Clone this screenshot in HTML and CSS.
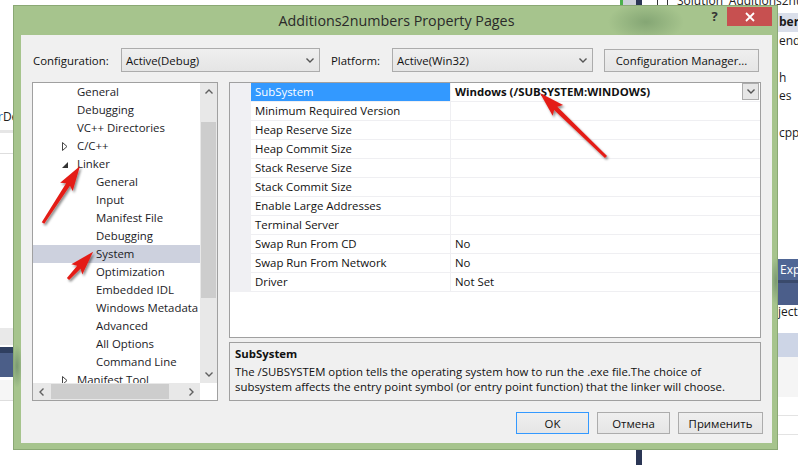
FILE: index.html
```html
<!DOCTYPE html>
<html>
<head>
<meta charset="utf-8">
<link rel="stylesheet" href="styles.css">
</head>
<body>
<div class="bg-left">
  <div class="bl-sp1"></div>
  <div class="bl-text"><span class="bl-blue">r</span>De</div>
  <div class="bl-sp2"></div>
  <div class="bl-band"></div>
  <div class="bl-sp3"></div>
  <div class="bl-line"></div>
  <div class="bl-sp4"></div>
  <div class="bl-gray"></div>
  <div class="bl-sp5"></div>
  <div class="bl-navy"></div>
  <div class="bl-blue2"></div>
  <div class="bl-sp6"></div>
  <div class="bl-light"></div>
  <div class="bl-line"></div>
</div>

<div class="bg-top"><span class="bg-top-icon"></span><span class="bg-top-text">Solution 'Additions2numbers' (1 project)</span></div>
<div class="bg-strip"><div class="bs-green"></div><div class="bs-gray"></div></div>
<div class="bg-vbar"></div>

<div class="bg-right">
  <div class="br-sp"></div>
  <div class="br-row br-sel">bers'</div>
  <div class="br-row">endencies</div>
  <div class="br-row"></div>
  <div class="br-row">h</div>
  <div class="br-row">es</div>
  <div class="br-row"></div>
  <div class="br-row">cpp</div>
  <div class="br-sp2"></div>
  <div class="br-bar">Exp</div>
  <div class="br-navy"></div>
  <div class="br-blue"></div>
  <div class="br-text">ject</div>
  <div class="br-sp3"></div>
  <div class="br-sel2"></div>
  <div class="br-light"></div>
  <div class="br-sp4"></div>
  <div class="br-line"></div>
  <div class="br-sp5"></div>
  <div class="br-line"></div>
</div>

<div class="window">
  <div class="titlebar">
    <div class="tb-left"></div>
    <div class="tb-title">Additions2numbers Property Pages</div>
    <div class="tb-controls">
      <div class="tb-help">?</div>
      <div class="tb-close"><svg width="10" height="10" viewBox="0 0 10 10"><path d="M1 1L9 9M9 1L1 9" stroke="#fff" stroke-width="1.8"/></svg></div>
    </div>
  </div>
  <div class="client">
    <div class="cfg-row">
      <div class="lbl lbl-config">Configuration:</div>
      <div class="combo combo-config"><span class="combo-text">Active(Debug)</span><svg class="chev" width="8" height="5" viewBox="0 0 8 5"><polyline points="0.5,0.5 4,4 7.5,0.5" fill="none" stroke="#555" stroke-width="1.4"/></svg></div>
      <div class="lbl lbl-platform">Platform:</div>
      <div class="combo combo-platform"><span class="combo-text">Active(Win32)</span><svg class="chev" width="8" height="5" viewBox="0 0 8 5"><polyline points="0.5,0.5 4,4 7.5,0.5" fill="none" stroke="#555" stroke-width="1.4"/></svg></div>
      <div class="btn btn-cm">Configuration Manager...</div>
    </div>

    <div class="main">
      <div class="tree">
        <div class="tree-items">
          <div class="ti l1"><span class="exp"></span>General</div>
          <div class="ti l1"><span class="exp"></span>Debugging</div>
          <div class="ti l1"><span class="exp"></span>VC++ Directories</div>
          <div class="ti l1"><span class="exp"><svg width="6" height="9" viewBox="0 0 6 9"><polygon points="0.5,0.5 5,4.5 0.5,8.5" fill="none" stroke="#444" stroke-width="1"/></svg></span>C/C++</div>
          <div class="ti l1"><span class="exp exp-open"><svg width="6" height="6" viewBox="0 0 6 6"><polygon points="6,0 6,6 0,6" fill="#333"/></svg></span>Linker</div>
          <div class="ti l2">General</div>
          <div class="ti l2">Input</div>
          <div class="ti l2">Manifest File</div>
          <div class="ti l2">Debugging</div>
          <div class="ti l2 ti-sel">System</div>
          <div class="ti l2">Optimization</div>
          <div class="ti l2">Embedded IDL</div>
          <div class="ti l2">Windows Metadata</div>
          <div class="ti l2">Advanced</div>
          <div class="ti l2">All Options</div>
          <div class="ti l2">Command Line</div>
          <div class="ti l1"><span class="exp"><svg width="6" height="9" viewBox="0 0 6 9"><polygon points="0.5,0.5 5,4.5 0.5,8.5" fill="none" stroke="#444" stroke-width="1"/></svg></span>Manifest Tool</div>
        </div>
        <div class="vscroll">
          <div class="sarr"><svg width="8" height="5" viewBox="0 0 8 5"><polyline points="0.5,4.5 4,1 7.5,4.5" fill="none" stroke="#606060" stroke-width="1.4"/></svg></div>
          <div class="vthumb"></div>
          <div class="sfill"></div>
          <div class="sarr"><svg width="8" height="5" viewBox="0 0 8 5"><polyline points="0.5,0.5 4,4 7.5,0.5" fill="none" stroke="#606060" stroke-width="1.4"/></svg></div>
        </div>
        <div class="hscroll">
          <div class="sarr"><svg width="5" height="8" viewBox="0 0 5 8"><polyline points="4.5,0.5 1,4 4.5,7.5" fill="none" stroke="#606060" stroke-width="1.4"/></svg></div>
          <div class="hthumb"></div>
          <div class="sfill"></div>
          <div class="sarr"><svg width="5" height="8" viewBox="0 0 5 8"><polyline points="0.5,0.5 4,4 0.5,7.5" fill="none" stroke="#606060" stroke-width="1.4"/></svg></div>
        </div>
        <div class="corner"></div>
      </div>

      <div class="rcol">
        <div class="grid">
          <div class="gr"><div class="gg"></div><div class="gn gn-sel">SubSystem</div><div class="gv"><span class="gv-text gv-bold">Windows (/SUBSYSTEM:WINDOWS)</span><span class="dd"><svg width="8" height="5" viewBox="0 0 8 5"><polyline points="0.5,0.5 4,4 7.5,0.5" fill="none" stroke="#555" stroke-width="1.4"/></svg></span></div></div>
          <div class="gr"><div class="gg"></div><div class="gn">Minimum Required Version</div><div class="gv"></div></div>
          <div class="gr"><div class="gg"></div><div class="gn">Heap Reserve Size</div><div class="gv"></div></div>
          <div class="gr"><div class="gg"></div><div class="gn">Heap Commit Size</div><div class="gv"></div></div>
          <div class="gr"><div class="gg"></div><div class="gn">Stack Reserve Size</div><div class="gv"></div></div>
          <div class="gr"><div class="gg"></div><div class="gn">Stack Commit Size</div><div class="gv"></div></div>
          <div class="gr"><div class="gg"></div><div class="gn">Enable Large Addresses</div><div class="gv"></div></div>
          <div class="gr"><div class="gg"></div><div class="gn">Terminal Server</div><div class="gv"></div></div>
          <div class="gr"><div class="gg"></div><div class="gn">Swap Run From CD</div><div class="gv"><span class="gv-text">No</span></div></div>
          <div class="gr"><div class="gg"></div><div class="gn">Swap Run From Network</div><div class="gv"><span class="gv-text">No</span></div></div>
          <div class="gr"><div class="gg"></div><div class="gn">Driver</div><div class="gv"><span class="gv-text">Not Set</span></div></div>
        </div>
        <div class="desc">
          <div class="desc-title">SubSystem</div>
          <div class="desc-text">The /SUBSYSTEM option tells the operating system how to run the .exe file.The choice of<br>subsystem affects the entry point symbol (or entry point function) that the linker will choose.</div>
        </div>
      </div>
    </div>

    <div class="btns">
      <div class="btn btn-ok">OK</div>
      <div class="btn btn-cancel">Отмена</div>
      <div class="btn btn-apply">Применить</div>
    </div>
  </div>
</div>

<svg class="arrows" width="798" height="465" viewBox="0 0 798 465">
  <defs>
    <filter id="sh" x="-20%" y="-20%" width="140%" height="140%">
      <feDropShadow dx="1.5" dy="2" stdDeviation="1.3" flood-color="#000" flood-opacity="0.45"/>
    </filter>
  </defs>
  <g filter="url(#sh)" fill="#e41e18">
    <polygon transform="translate(606,157) rotate(-135.9)" points="0,-1.5 70,-2.3 67,-7.5 92,0 67,7.5 70,2.3 0,1.5"/>
    <polygon transform="translate(43,223) rotate(-57)" points="0,-1.5 46,-2.3 43,-7.5 68,0 43,7.5 46,2.3 0,1.5"/>
    <polygon transform="translate(68,279) rotate(-47.2)" points="0,-1.5 16,-2.3 13,-7.5 37,0 13,7.5 16,2.3 0,1.5"/>
  </g>
</svg>
</body>
</html>
```

FILE: styles.css
```css
* { box-sizing: border-box; }
body {
  margin: 0;
  width: 798px;
  height: 465px;
  overflow: hidden;
  position: relative;
  background: #fff;
  font-family: "Open Sans", "Noto Sans", sans-serif;
  font-size: 11.4px;
  color: #111;
}

/* ---------- background (desktop behind the dialog) ---------- */
.bg-left { position: absolute; left: 0; top: 0; width: 40px; height: 465px; display: flex; flex-direction: column; }
.bl-sp1 { height: 110px; }
.bl-text { height: 14px; line-height: 14px; margin-left: -2px; white-space: nowrap; font-size: 12px; color: #222; }
.bl-blue { color: #2b6fc4; }
.bl-sp2 { height: 6px; }
.bl-band { height: 3px; background: #e6e6e6; }
.bl-sp3 { height: 20px; }
.bl-line { height: 1px; background: #dedede; }
.bl-sp4 { height: 174px; }
.bl-gray { height: 17px; background: #e9e9e9; }
.bl-sp5 { height: 2px; }
.bl-navy { height: 6px; background: #2f3f60; }
.bl-blue2 { height: 24px; background: #4b5e88; }
.bl-sp6 { height: 3px; }
.bl-light { height: 20px; background: #f6f6f6; }

.bg-top { position: absolute; left: 657px; top: 0; height: 6px; width: 141px; overflow: hidden; display: flex; align-items: flex-start; gap: 9px; white-space: nowrap; font-size: 12px; color: #222; }
.bg-top-icon { width: 11px; height: 13px; margin-top: -6px; border: 1.5px solid #333; flex: none; }
.bg-top-text { margin-top: -7px; line-height: 16px; }
.bg-strip { position: absolute; left: 620px; top: 0; height: 6px; display: flex; }
.bs-green { width: 3px; background: #4cb04c; }
.bs-gray { width: 13px; background: #cdd1d9; }
.bg-vbar { position: absolute; left: 636px; top: 0; width: 6px; height: 465px; background: #2b3655; }

.bg-right { position: absolute; left: 778px; top: 0; width: 20px; height: 465px; display: flex; flex-direction: column; white-space: nowrap; font-size: 12px; color: #1a1a1a; overflow: hidden; }
.br-sp { height: 13px; flex: none; }
.br-row { height: 18.5px; line-height: 18.5px; flex: none; padding-left: 1px; }
.br-sel { background: #dadfea; font-weight: 700; }
.br-sp2 { height: 116.5px; flex: none; }
.br-bar { height: 21px; line-height: 21px; flex: none; background: #4f6695; color: #fff; padding-left: 2px; }
.br-navy { height: 3px; flex: none; background: #3a4a6c; }
.br-blue { height: 22px; flex: none; background: #4b5e8a; }
.br-text { height: 13px; line-height: 13px; flex: none; }
.br-sp3 { height: 15px; flex: none; }
.br-sel2 { height: 24px; flex: none; background: #cdd5e6; }
.br-light { height: 40px; flex: none; background: #f5f5f5; }
.br-sp4 { height: 18px; flex: none; }
.br-line { height: 1px; flex: none; background: #e3e3e3; }
.br-sp5 { height: 18px; flex: none; }

/* ---------- dialog window ---------- */
.window {
  position: absolute;
  left: 13px;
  top: 5px;
  width: 765px;
  height: 445px;
  background:
    radial-gradient(ellipse 38px 20px at 632px 16px, rgba(70,110,70,0.35), rgba(70,110,70,0)),
    radial-gradient(ellipse 6px 24px at 762px 275px, rgba(70,100,80,0.45), rgba(70,100,80,0)),
    radial-gradient(ellipse 6px 22px at 3px 360px, rgba(70,100,80,0.45), rgba(70,100,80,0)),
    #a6c48d;
  border: 1px solid #8aa874;
  padding: 0 5px 6px 7px;
  display: flex;
  flex-direction: column;
}
.titlebar {
  height: 29px;
  display: grid;
  grid-template-columns: 1fr auto 1fr;
  align-items: center;
}
.tb-title { font-size: 14.3px; color: #2a2a2a; line-height: 29px; }
.tb-controls { justify-self: end; align-self: start; margin-top: 1px; display: flex; }
.tb-help { width: 27px; height: 19px; line-height: 19px; text-align: center; font-weight: 700; font-size: 13px; color: #333; padding-left: 2px; }
.tb-close { width: 45px; height: 19px; background: #c75050; display: flex; align-items: center; justify-content: center; }

.client {
  flex: 1;
  background: #f0f0f0;
  padding: 13px 9px 9px 11px;
  display: flex;
  flex-direction: column;
}

.cfg-row { display: flex; align-items: center; height: 24px; }
.lbl { white-space: nowrap; }
.lbl-config { width: 89px; padding-left: 1px; }
.lbl-platform { width: 61px; margin-left: 11px; }
.combo {
  height: 24px;
  border: 1px solid #acacac;
  background: linear-gradient(#efefef, #e5e5e5);
  display: flex;
  align-items: center;
  padding: 0 4px 0 4px;
}
.combo-text { flex: 1; }
.chev { margin-right: 1px; }
.combo-config { width: 199px; }
.combo-platform { width: 201px; }

.btn {
  height: 23px;
  border: 1px solid #acacac;
  background: linear-gradient(#efefef, #e5e5e5);
  display: flex;
  align-items: center;
  justify-content: center;
  white-space: nowrap;
}
.btn-cm { width: 155px; margin-left: 11px; }

.main { display: flex; gap: 11px; margin-top: 10px; height: 319px; }

/* tree */
.tree {
  width: 186px;
  border: 1px solid #a0a0a0;
  background: #fff;
  display: grid;
  grid-template-columns: 1fr 17px;
  grid-template-rows: 1fr 17px;
  overflow: hidden;
}
.tree-items { overflow: hidden; padding-top: 0; }
.ti { height: 18px; line-height: 18px; display: flex; align-items: center; white-space: nowrap; color: #1b1b26; }
.l1 { padding-left: 29px; }
.l2 { padding-left: 63px; }
.exp { width: 15px; height: 18px; display: flex; align-items: center; }
.exp-open { align-items: flex-start; padding-top: 7px; }
.ti-sel { background: #cdd1de; }

.vscroll { background: #e8e8e8; display: flex; flex-direction: column; }
.sarr { width: 17px; height: 17px; display: flex; align-items: center; justify-content: center; flex: none; }
.vthumb { height: 176px; margin: 22px 1px 0 1px; background: #cdcdcd; flex: none; }
.sfill { flex: 1; }
.hscroll { background: #e8e8e8; display: flex; flex-direction: row; align-items: center; }
.hthumb { width: 118px; height: 15px; margin-left: 1px; background: #cdcdcd; flex: none; }
.corner { background: #fff; }

/* property grid */
.rcol { width: 532px; display: flex; flex-direction: column; gap: 4px; }
.grid { height: 256px; border: 1px solid #a0a0a0; background: #fff; }
.gr { display: flex; height: 19px; }
.gg { width: 21px; background: #f0f0f3; }
.gn {
  width: 199px;
  padding-left: 4px;
  line-height: 18px;
  border-bottom: 1px solid #efeff2;
  white-space: nowrap;
  color: #111;
}
.gn-sel { background: #3399ff; color: #fff; }
.gv {
  flex: 1;
  border-left: 1px solid #efeff2;
  border-bottom: 1px solid #efeff2;
  padding-left: 4px;
  display: flex;
  align-items: flex-start;
  line-height: 18px;
}
.gv-text { flex: 1; white-space: nowrap; }
.gv-bold { font-weight: 700; }
.dd {
  width: 17px;
  height: 17px;
  margin-right: 1px;
  border: 1px solid #acacac;
  background: #e6e6e6;
  display: flex;
  align-items: center;
  justify-content: center;
}

.desc {
  height: 59px;
  border: 1px solid #a0a0a0;
  background: #f0f0f0;
  padding: 3px 5px;
}
.desc-title { font-weight: 700; line-height: 15px; margin-bottom: 4px; }
.desc-text { line-height: 14.5px; white-space: nowrap; }

.btns { display: flex; justify-content: flex-end; gap: 8px; margin-top: 11px; }
.btn-ok { width: 73px; height: 22px; border-color: #3399ff; }
.btn-cancel { width: 73px; height: 22px; }
.btn-apply { width: 85px; height: 22px; }

.arrows { position: absolute; left: 0; top: 0; pointer-events: none; }
```
